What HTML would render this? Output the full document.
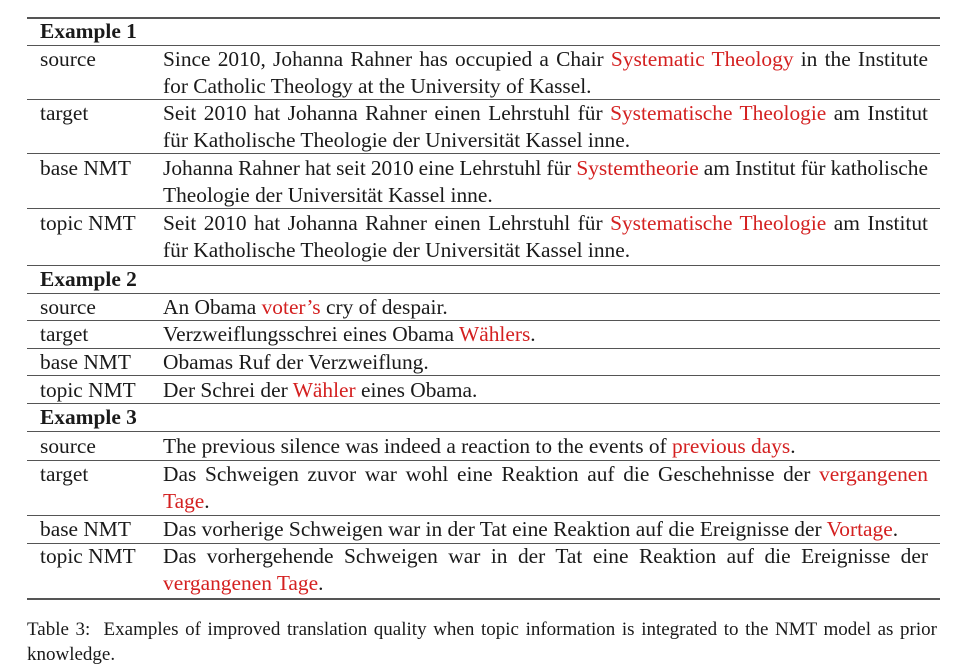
<!DOCTYPE html>
<html><head><meta charset="utf-8"><style>
body{margin:0;width:963px;height:669px;background:#fff;position:relative;font-family:"Liberation Serif",serif;color:#1a1a1a;overflow:hidden}
.l{position:absolute;left:27px;width:913px;height:1px;background:#555}
.t{position:absolute;font-size:21.4px;line-height:27px;white-space:nowrap}
.c{position:absolute;left:163px;width:765px;font-size:21.4px;line-height:27px;white-space:nowrap;text-align:justify;text-align-last:justify}
b{font-weight:bold}
.r{color:#d42020}
.cap{position:absolute;left:27px;width:910px;font-size:19px;line-height:25px;white-space:nowrap}
</style></head><body>
<div class="l" style="top:17px;height:2px"></div>
<div class="l" style="top:45px"></div>
<div class="l" style="top:99px"></div>
<div class="l" style="top:153px"></div>
<div class="l" style="top:208px"></div>
<div class="l" style="top:265px"></div>
<div class="l" style="top:293px"></div>
<div class="l" style="top:320px"></div>
<div class="l" style="top:348px"></div>
<div class="l" style="top:375px"></div>
<div class="l" style="top:403px"></div>
<div class="l" style="top:431px"></div>
<div class="l" style="top:460px"></div>
<div class="l" style="top:515px"></div>
<div class="l" style="top:543px"></div>
<div class="l" style="top:598px;height:2px"></div>

<div class="t" style="left:40px;top:18px"><b>Example 1</b></div>
<div class="t" style="left:40px;top:46px">source</div>
<div class="c" style="top:46px">Since 2010, Johanna Rahner has occupied a Chair <span class="r">Systematic Theology</span> in the Institute</div>
<div class="t" style="left:163px;top:73px">for Catholic Theology at the University of Kassel.</div>
<div class="t" style="left:40px;top:100px">target</div>
<div class="c" style="top:100px">Seit 2010 hat Johanna Rahner einen Lehrstuhl für <span class="r">Systematische Theologie</span> am Institut</div>
<div class="t" style="left:163px;top:127px">für Katholische Theologie der Universität Kassel inne.</div>
<div class="t" style="left:40px;top:155px">base NMT</div>
<div class="c" style="top:155px;word-spacing:-1.5px">Johanna Rahner hat seit 2010 eine Lehrstuhl für <span class="r">Systemtheorie</span> am Institut für katholische</div>
<div class="t" style="left:163px;top:182px">Theologie der Universität Kassel inne.</div>
<div class="t" style="left:40px;top:210px">topic NMT</div>
<div class="c" style="top:210px">Seit 2010 hat Johanna Rahner einen Lehrstuhl für <span class="r">Systematische Theologie</span> am Institut</div>
<div class="t" style="left:163px;top:237px">für Katholische Theologie der Universität Kassel inne.</div>

<div class="t" style="left:40px;top:266px"><b>Example 2</b></div>
<div class="t" style="left:40px;top:294px">source</div>
<div class="t" style="left:163px;top:294px">An Obama <span class="r">voter’s</span> cry of despair.</div>
<div class="t" style="left:40px;top:321px">target</div>
<div class="t" style="left:163px;top:321px">Verzweiflungsschrei eines Obama <span class="r">Wählers</span>.</div>
<div class="t" style="left:40px;top:349px">base NMT</div>
<div class="t" style="left:163px;top:349px">Obamas Ruf der Verzweiflung.</div>
<div class="t" style="left:40px;top:377px">topic NMT</div>
<div class="t" style="left:163px;top:377px">Der Schrei der <span class="r">Wähler</span> eines Obama.</div>

<div class="t" style="left:40px;top:404px"><b>Example 3</b></div>
<div class="t" style="left:40px;top:433px">source</div>
<div class="t" style="left:163px;top:433px">The previous silence was indeed a reaction to the events of <span class="r">previous days</span>.</div>
<div class="t" style="left:40px;top:461px">target</div>
<div class="c" style="top:461px">Das Schweigen zuvor war wohl eine Reaktion auf die Geschehnisse der <span class="r">vergangenen</span></div>
<div class="t" style="left:163px;top:488px"><span class="r">Tage</span>.</div>
<div class="t" style="left:40px;top:516px">base NMT</div>
<div class="t" style="left:163px;top:516px">Das vorherige Schweigen war in der Tat eine Reaktion auf die Ereignisse der <span class="r">Vortage</span>.</div>
<div class="t" style="left:40px;top:543px">topic NMT</div>
<div class="c" style="top:543px">Das vorhergehende Schweigen war in der Tat eine Reaktion auf die Ereignisse der</div>
<div class="t" style="left:163px;top:570px"><span class="r">vergangenen Tage</span>.</div>

<div class="cap" style="top:617px;text-align:justify;text-align-last:justify">Table 3:&nbsp; Examples of improved translation quality when topic information is integrated to the NMT model as prior</div>
<div class="cap" style="top:642px">knowledge.</div>
</body></html>
